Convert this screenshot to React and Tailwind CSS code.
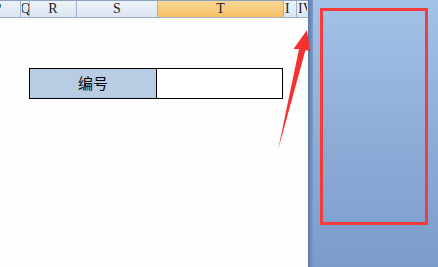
const columns = [
  { label: 'Q', w: 'w-[8px]' },
  { label: 'R', w: 'w-[47px]' },
  { label: 'S', w: 'w-[81px]' },
];

const HeaderCell = ({ label, w, active }) => (
  <div
    className={`${w} h-full shrink-0 border-r border-[#9eb3cb] flex items-center justify-center overflow-hidden ${
      active ? 'bg-gradient-to-b from-[#f9d796] to-[#f4c063]' : 'bg-gradient-to-b from-[#eef3f9] to-[#dbe4ef]'
    }`}
  >
    {label}
  </div>
);

export default function App() {
  return (
    <div className="relative w-[438px] h-[267px] flex overflow-hidden bg-white">
      <div className="w-[308px] h-full flex flex-col bg-[#fefefe]">
        <div
          className="h-[18px] flex border-t border-b border-t-[#8ba1bc] border-b-[#9eb3cb] text-[14px] leading-none text-[#222]"
          style={{ fontFamily: '"Liberation Serif", serif' }}
        >
          <div className="w-[21px] h-full shrink-0 border-r border-[#9eb3cb] overflow-hidden bg-gradient-to-b from-[#eef3f9] to-[#dbe4ef] flex items-center">
            <div className="w-[47px] ml-[-26px] shrink-0 text-center">P</div>
          </div>
          <div className="w-px h-full bg-gradient-to-b from-[#eef3f9] to-[#dbe4ef]" />
          {columns.map((c) => (
            <HeaderCell key={c.label} label={c.label} w={c.w} />
          ))}
          <HeaderCell label="T" w="w-[126px]" active />
          <div className="w-[13px] h-full shrink-0 border-r border-[#9eb3cb] overflow-hidden bg-gradient-to-b from-[#eef3f9] to-[#dbe4ef] flex items-center pl-[1px]">
            I
          </div>
          <div className="w-[10px] h-full shrink-0 overflow-hidden bg-gradient-to-b from-[#eef3f9] to-[#dbe4ef] flex items-center pl-[1px] whitespace-nowrap">
            IV
          </div>
          <div className="flex-1 h-full bg-[#d9e2ee]" />
        </div>

        <div className="flex-1 pl-[29px] pt-[50px]">
          <div className="w-[254px] h-[31px] flex border border-black">
            <div
              className="w-[127px] h-full bg-[#b8cce4] border-r border-black flex items-center justify-center text-[15px] text-black"
              style={{ fontFamily: '"Noto Sans CJK SC", sans-serif' }}
            >
              编号
            </div>
            <div className="flex-1 h-full bg-white" />
          </div>
        </div>
      </div>

      <div className="w-[5px] h-full bg-gradient-to-r from-[#5b78a4] to-[#7e9bc5]" />
      <div className="flex-1 h-full bg-gradient-to-b from-[#a4c2e7] via-[#8eadd9] to-[#7b9cca] pt-[8px] pl-[7px]">
        <div className="w-[108px] h-[217px] border-[3px] border-[#f53b3b]" />
      </div>

      <svg className="absolute left-0 top-0 pointer-events-none" width="438" height="267">
        <polygon
          points="307,30 310,51 305.5,50 278,150 299,49 293.5,49"
          fill="#f62f2f"
        />
      </svg>
    </div>
  );
}
